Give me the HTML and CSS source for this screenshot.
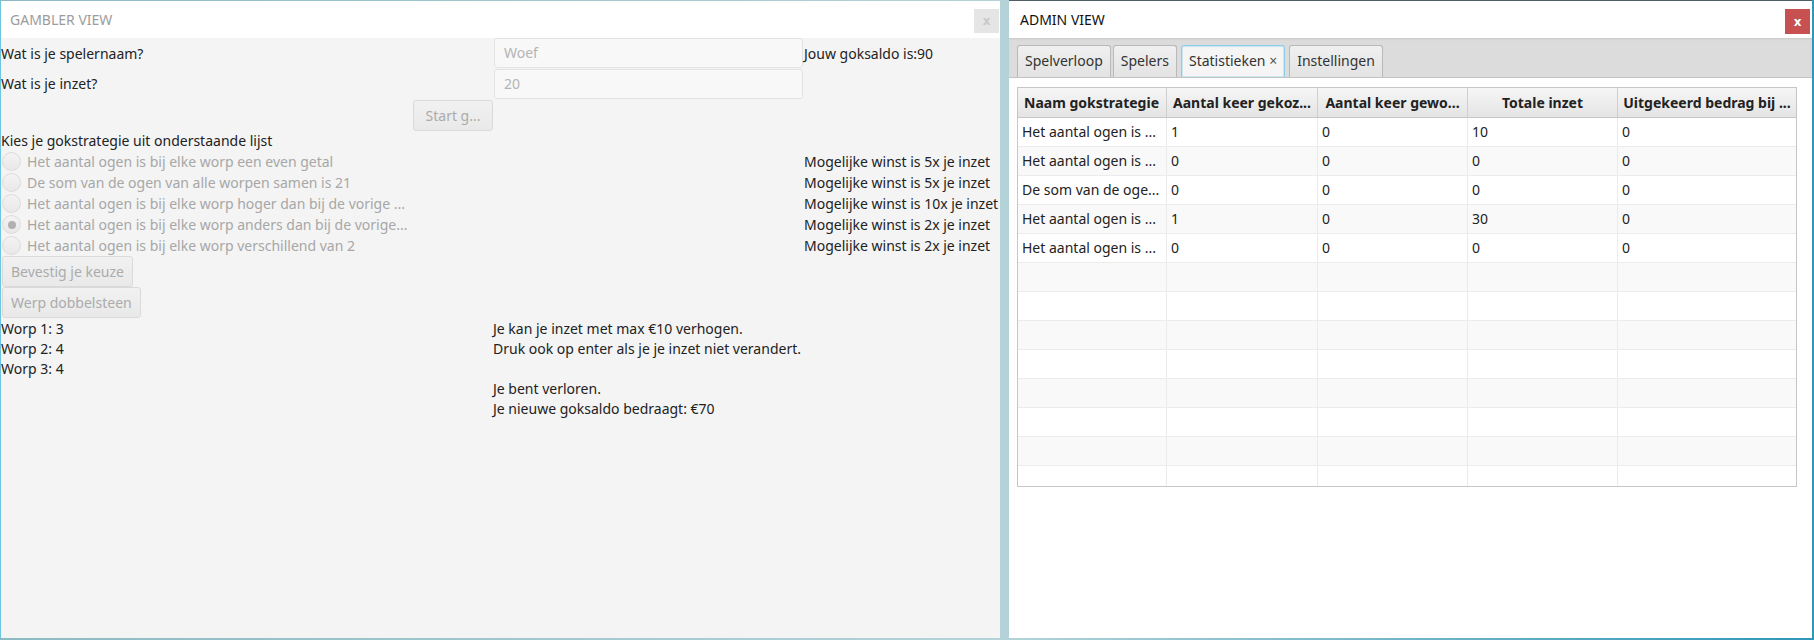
FILE: index.html
```html
<!DOCTYPE html>
<html lang="nl">
<head>
<meta charset="utf-8">
<title>Gok</title>
<link rel="stylesheet" href="styles.css">
</head>
<body>
<div class="desktop">
  <section class="win gambler">
    <header class="titlebar">
      <span class="title">GAMBLER VIEW</span>
      <span class="close close-off">x</span>
    </header>
    <div class="content">
      <div class="row r-30">
        <span>Wat is je spelernaam?</span>
        <div class="field">Woef</div>
        <span class="col3">Jouw goksaldo is:90</span>
      </div>
      <div class="row r-31">
        <span>Wat is je inzet?</span>
        <div class="field">20</div>
      </div>
      <div class="row r-32">
        <div class="btn btn-start">Start g...</div>
      </div>
      <div class="line">Kies je gokstrategie uit onderstaande lijst</div>
      <div class="row r-21"><span class="radio"><span class="dot"></span>Het aantal ogen is bij elke worp een even getal</span><span class="col3">Mogelijke winst is 5x je inzet</span></div>
      <div class="row r-21"><span class="radio"><span class="dot"></span>De som van de ogen van alle worpen samen is 21</span><span class="col3">Mogelijke winst is 5x je inzet</span></div>
      <div class="row r-21"><span class="radio"><span class="dot"></span>Het aantal ogen is bij elke worp hoger dan bij de vorige ...</span><span class="col3">Mogelijke winst is 10x je inzet</span></div>
      <div class="row r-21"><span class="radio"><span class="dot on"></span>Het aantal ogen is bij elke worp anders dan bij de vorige...</span><span class="col3">Mogelijke winst is 2x je inzet</span></div>
      <div class="row r-21"><span class="radio"><span class="dot"></span>Het aantal ogen is bij elke worp verschillend van 2</span><span class="col3">Mogelijke winst is 2x je inzet</span></div>
      <div class="btn btn-left">Bevestig je keuze</div>
      <div class="btn btn-left">Werp dobbelsteen</div>
      <div class="row2 r-20"><span>Worp 1: 3</span><span>Je kan je inzet met max €10 verhogen.</span></div>
      <div class="row2 r-20"><span>Worp 2: 4</span><span>Druk ook op enter als je je inzet niet verandert.</span></div>
      <div class="row2 r-20"><span>Worp 3: 4</span><span></span></div>
      <div class="row2 r-20"><span></span><span>Je bent verloren.</span></div>
      <div class="row2 r-20"><span></span><span>Je nieuwe goksaldo bedraagt: €70</span></div>
    </div>
  </section>

  <section class="win admin">
    <header class="titlebar">
      <span class="title">ADMIN VIEW</span>
      <span class="close close-red">x</span>
    </header>
    <div class="tabbar">
      <span class="tab">Spelverloop</span>
      <span class="tab">Spelers</span>
      <span class="tab tab-sel">Statistieken <span class="tabx">×</span></span>
      <span class="tab">Instellingen</span>
    </div>
    <div class="tabcontent">
      <div class="table">
        <div class="thead">
          <span class="th th-first">Naam gokstrategie</span>
          <span class="th">Aantal keer gekoz...</span>
          <span class="th">Aantal keer gewo...</span>
          <span class="th">Totale inzet</span>
          <span class="th">Uitgekeerd bedrag bij ...</span>
        </div>
        <div class="tr"><span>Het aantal ogen is ...</span><span>1</span><span>0</span><span>10</span><span>0</span></div>
        <div class="tr"><span>Het aantal ogen is ...</span><span>0</span><span>0</span><span>0</span><span>0</span></div>
        <div class="tr"><span>De som van de oge...</span><span>0</span><span>0</span><span>0</span><span>0</span></div>
        <div class="tr"><span>Het aantal ogen is ...</span><span>1</span><span>0</span><span>30</span><span>0</span></div>
        <div class="tr"><span>Het aantal ogen is ...</span><span>0</span><span>0</span><span>0</span><span>0</span></div>
        <div class="tr"><span></span><span></span><span></span><span></span><span></span></div>
        <div class="tr"><span></span><span></span><span></span><span></span><span></span></div>
        <div class="tr"><span></span><span></span><span></span><span></span><span></span></div>
        <div class="tr"><span></span><span></span><span></span><span></span><span></span></div>
        <div class="tr"><span></span><span></span><span></span><span></span><span></span></div>
        <div class="tr"><span></span><span></span><span></span><span></span><span></span></div>
        <div class="tr"><span></span><span></span><span></span><span></span><span></span></div>
        <div class="tr"><span></span><span></span><span></span><span></span><span></span></div>
        <div class="tr"><span></span><span></span><span></span><span></span><span></span></div>
      </div>
    </div>
  </section>
</div>
</body>
</html>
```

FILE: styles.css
```css
* { box-sizing: border-box; margin: 0; padding: 0; }
:root { --ui: "Noto Sans", "Open Sans", sans-serif; }
html, body { width: 1814px; height: 640px; overflow: hidden; }
body {
  font-family: var(--ui);
  font-size: 14px;
  color: #222;
  background: linear-gradient(90deg, #8cbac3 0%, #b4d3d8 55%, #2f97b8 100%);
}
.desktop { display: flex; align-items: flex-start; height: 640px; }

.win { display: flex; flex-direction: column; }
.titlebar {
  height: 37px; flex: none; background: #fff;
  display: flex; justify-content: space-between; align-items: flex-start;
}
.title { line-height: 37px; }
.close {
  margin-top: 8px; width: 25px; height: 24px;
  display: flex; align-items: center; justify-content: center;
  font-family: "DejaVu Sans", sans-serif; font-size: 12px; font-weight: bold;
}
.close-off { background: #e5e5e5; color: #c9c9c9; margin-right: 1px; }
.close-red { background: #c75050; color: #fff; margin-right: 2px; height: 25px; }

/* gambler */
.gambler {
  width: 1000px; height: 637px; margin-top: 1px;
  border-left: 1px solid #6fc4de; background: #f4f4f4;
}
.gambler .title { color: #9c9c9c; padding-left: 9px; }
.content { display: flex; flex-direction: column; }
.row { display: grid; grid-template-columns: 492px 310px 1fr; align-items: center; }
.row2 { display: grid; grid-template-columns: 492px 1fr; align-items: center; }
.r-30 { height: 30px; }
.r-31 { height: 31px; }
.r-32 { height: 32px; }
.r-21 { height: 21px; }
.r-20 { height: 20px; }
.line { height: 20px; line-height: 20px; }
.field {
  margin-left: 1px; width: 309px; height: 30px;
  border: 1px solid #e3e3e3; border-radius: 3px; background: #f8f8f8;
  color: #b4b4b4; padding-left: 9px; line-height: 28px;
}
.r-31 .field { align-self: end; }
.col3 { padding-left: 1px; white-space: nowrap; }
.btn {
  height: 31px; line-height: 29px; border: 1px solid #dadada; border-radius: 3px;
  background: linear-gradient(#f1f1f1, #e9e9e9); color: #ababab;
  padding: 0 8px; white-space: nowrap;
}
.btn-start { width: 80px; justify-self: end; text-align: center; padding: 0; }
.btn-left { margin-left: 1px; align-self: flex-start; }
.radio { grid-column: 1 / 3; display: flex; align-items: center; color: #a7a7a7; white-space: nowrap; }
.dot {
  width: 19px; height: 19px; border-radius: 50%; margin: 0 6px 0 1px;
  border: 1px solid #dcdcdc; background: linear-gradient(#f3f3f3, #e8e8e8);
  display: flex; align-items: center; justify-content: center; flex: none;
}
.dot.on::after { content: ""; width: 8px; height: 8px; border-radius: 50%; background: #b1b1b1; }

/* admin */
.admin {
  margin-left: 9px; width: 803px; height: 638px;
  border-top: 1px solid #4d5f63; background: #fff;
}
.admin .title { padding-left: 11px; color: #111; }
.tabbar {
  height: 40px; flex: none; background: #dcdcdc;
  border-bottom: 1px solid #c3c3c3;
  display: flex; align-items: flex-end; gap: 2px; padding-left: 8px;
  box-shadow: inset 0 2px 2px -1px #c8c8c8;
}
.tab {
  height: 32px; line-height: 30px; padding: 0 7px;
  border: 1px solid #b9b9b9; border-bottom: none; border-radius: 3px 3px 0 0;
  background: linear-gradient(#f0f0f0, #e3e3e3); color: #333; white-space: nowrap;
}
.tab-sel {
  background: #f5f5f5; border-color: #8fcde6;
  box-shadow: inset 0 0 0 1px #c9e7f3; margin: 0 2px;
}
.tabx { color: #555; }
.tabcontent { flex: 1; padding: 9px 15px 0 8px; }
.table { height: 400px; overflow: hidden; border: 1px solid #c6c6c6; }
.thead, .tr { display: grid; grid-template-columns: 149px 151px 150px 150px 1fr; }
.thead { height: 30px; border-bottom: 1px solid #c6c6c6; background: linear-gradient(#f6f6f6, #e4e4e4); }
.th {
  font-weight: bold; text-align: center; line-height: 29px; color: #222;
  border-right: 1px solid #cfcfcf; white-space: nowrap; overflow: hidden;
}
.th-first { text-align: left; padding-left: 6px; }
.tr { height: 29px; border-bottom: 1px solid #ececec; }
.tr:nth-of-type(odd) { background: #f9f9f9; }
.tr > span { border-right: 1px solid #ebebeb; line-height: 28px; padding-left: 4px; white-space: nowrap; overflow: hidden; }
.th:last-child, .tr > span:last-child { border-right: none; }
```
